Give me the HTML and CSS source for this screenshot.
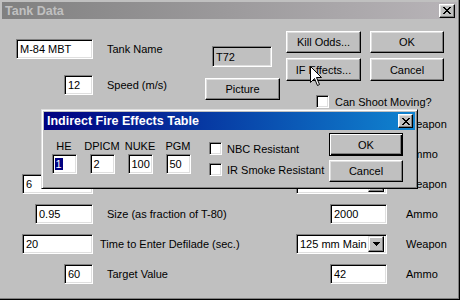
FILE: index.html
```html
<!DOCTYPE html>
<html lang="en">
<head>
  <meta charset="UTF-8" />
  <title>Tank Data</title>
  <link rel="stylesheet" href="styles.css">
</head>
<body>
  <div class="window">
    <div class="titlebar inactive">
      <span class="title">Tank Data</span>
      <span class="tb-btn">
        <svg width="8" height="7" viewBox="0 0 8 7"><path d="M0 0h2v1H0zM6 0h2v1H6zM1 1h2v1H1zM5 1h2v1H5zM2 2h4v1H2zM3 3h2v1H3zM2 4h4v1H2zM1 5h2v1H1zM5 5h2v1H5zM0 6h2v1H0zM6 6h2v1H6z"/></svg>
      </span>
    </div>

    <div class="client">
      <div class="top">
        <div class="top-left">
          <div class="frow">
            <div class="fcell"><div class="field w77">M-84 MBT</div></div>
            <span class="label">Tank Name</span>
          </div>
          <div class="frow">
            <div class="fcell"><div class="field w29">12</div></div>
            <span class="label">Speed (m/s)</span>
          </div>
        </div>
        <div class="top-mid">
          <div class="field disabled w60">T72</div>
          <div class="btn picture">Picture</div>
        </div>
        <div class="top-right">
          <div class="btn-grid">
            <div class="btn">Kill Odds...</div>
            <div class="btn">OK</div>
            <div class="btn">IF Effects...</div>
            <div class="btn">Cancel</div>
          </div>
          <div class="check moving"><span class="box"></span>Can Shoot Moving?</div>
        </div>
      </div>

      <!-- weapon / ammo rows, the upper ones sit under the IF dialog -->
      <div class="rows">
        <div class="fcell"></div>
        <span class="label"></span>
        <div class="rcell"></div>
        <span class="rlabel">Weapon</span>

        <div class="fcell"></div>
        <span class="label"></span>
        <div class="rcell"></div>
        <span class="rlabel">Ammo</span>

        <div class="fcell"><div class="field w71">6</div></div>
        <span class="label"></span>
        <div class="rcell"><div class="combo"><span class="combo-text"></span><span class="drop"><svg width="7" height="4" viewBox="0 0 7 4"><path d="M0 0h7v1H0zM1 1h5v1H1zM2 2h3v1H2zM3 3h1v1H3z"/></svg></span></div></div>
        <span class="rlabel">Weapon</span>

        <div class="fcell"><div class="field w58">0.95</div></div>
        <span class="label">Size (as fraction of T-80)</span>
        <div class="rcell"><div class="field w57">2000</div></div>
        <span class="rlabel">Ammo</span>

        <div class="fcell"><div class="field w71">20</div></div>
        <span class="label near">Time to Enter Defilade (sec.)</span>
        <div class="rcell"><div class="combo"><span class="combo-text">125 mm Main Gun</span><span class="drop"><svg width="7" height="4" viewBox="0 0 7 4"><path d="M0 0h7v1H0zM1 1h5v1H1zM2 2h3v1H2zM3 3h1v1H3z"/></svg></span></div></div>
        <span class="rlabel">Weapon</span>

        <div class="fcell"><div class="field w29">60</div></div>
        <span class="label">Target Value</span>
        <div class="rcell"><div class="field w57">42</div></div>
        <span class="rlabel">Ammo</span>
      </div>
    </div>

    <!-- modal on top of the form -->
    <div class="dialog">
      <div class="titlebar active">
        <span class="title">Indirect Fire Effects Table</span>
        <span class="tb-btn small">
          <svg width="8" height="7" viewBox="0 0 8 7"><path d="M0 0h2v1H0zM6 0h2v1H6zM1 1h2v1H1zM5 1h2v1H5zM2 2h4v1H2zM3 3h2v1H3zM2 4h4v1H2zM1 5h2v1H1zM5 5h2v1H5zM0 6h2v1H0zM6 6h2v1H6z"/></svg>
        </span>
      </div>
      <div class="dlg-body">
        <div class="if-table">
          <span>HE</span>
          <span>DPICM</span>
          <span>NUKE</span>
          <span>PGM</span>
          <div class="field w25"><span class="sel">1</span></div>
          <div class="field w25">2</div>
          <div class="field w25">100</div>
          <div class="field w25">50</div>
        </div>
        <div class="if-checks">
          <div class="check"><span class="box"></span>NBC Resistant</div>
          <div class="check"><span class="box"></span>IR Smoke Resistant</div>
        </div>
        <div class="dlg-buttons">
          <div class="btn default">OK</div>
          <div class="btn">Cancel</div>
        </div>
      </div>
    </div>

    <svg class="cursor" width="13" height="21" viewBox="0 0 13 21">
      <path d="M0.5 0.5V16.5L4.5 12.5L7.5 19.5L9.5 18.5L6.5 11.5H11.5Z" fill="#fff" stroke="#000" stroke-width="1"/>
    </svg>
  </div>
</body>
</html>
```

FILE: styles.css
```css
body {
  margin: 0;
  font-family: "Liberation Sans", Arial, sans-serif;
  font-size: 11px;
  color: #000;
  background: #c0c0c0;
}
.window {
  position: relative;
  width: 460px;
  height: 300px;
  box-sizing: border-box;
  padding: 2px 3px 3px 2px;
  background: #c0c0c0;
  box-shadow: inset -1px -1px #000, inset -2px -2px #808080;
  overflow: hidden;
}
.titlebar {
  display: flex;
  align-items: center;
  justify-content: space-between;
  height: 17px;
  padding: 0 2px 0 3px;
}
.titlebar .title {
  font-weight: bold;
  font-size: 12.5px;
}
.titlebar.inactive {
  background: linear-gradient(to right, #808080, #b8b4b8);
  color: #c0c0c0;
}
.titlebar.active {
  height: 18px;
  background: linear-gradient(to right, #000080, #1084d0);
  color: #fff;
}
.tb-btn {
  width: 16px;
  height: 14px;
  box-sizing: border-box;
  display: flex;
  align-items: center;
  justify-content: center;
  background: #c0c0c0;
  border: 1px solid;
  border-color: #fff #000 #000 #fff;
  box-shadow: inset -1px -1px #808080, inset 1px 1px #dfdfdf;
}
.tb-btn.small {
  width: 15px;
}
.tb-btn svg {
  fill: #000;
  shape-rendering: crispEdges;
}

/* form */
.client {
  padding-top: 14px;
}
.top {
  display: flex;
  height: 73px;
}
.top-left {
  width: 204px;
  padding-top: 6px;
  display: flex;
  flex-direction: column;
  gap: 16px;
}
.frow {
  display: flex;
  align-items: center;
}
.fcell,
.rcell {
  width: 91px;
  display: flex;
  justify-content: flex-end;
}
.label {
  padding-left: 14px;
  white-space: nowrap;
}
.label.near {
  padding-left: 7px;
}
.rlabel {
  padding-left: 19px;
}
.top-mid {
  width: 80px;
  padding-top: 13px;
}
.top-mid .field {
  margin-left: 6px;
  height: 21px;
}
.btn.picture {
  width: 75px;
  height: 22px;
  margin-top: 11px;
  margin-left: -1px;
}
.top-right {
  display: flex;
  flex-direction: column;
  margin-top: -2px;
}
.btn-grid {
  display: grid;
  grid-template-columns: 75px 74px;
  grid-template-rows: 22px 23px;
  column-gap: 9px;
  row-gap: 5px;
}
.check {
  display: flex;
  align-items: center;
  gap: 5px;
  white-space: nowrap;
}
.check.moving {
  margin: 14px 0 0 30px;
  gap: 6px;
}
.box {
  width: 13px;
  height: 13px;
  box-sizing: border-box;
  background: #fff;
  border: 1px solid;
  border-color: #808080 #fff #fff #808080;
  box-shadow: inset 1px 1px #000, inset -1px -1px #dfdfdf;
}

.rows {
  display: grid;
  grid-template-columns: 91px 203px 91px 1fr;
  grid-auto-rows: 20px;
  row-gap: 10px;
  align-items: center;
  margin-top: 8px;
}

/* controls */
.field {
  height: 20px;
  box-sizing: border-box;
  padding: 0 3px;
  display: flex;
  align-items: center;
  background: #fff;
  border: 1px solid;
  border-color: #808080 #fff #fff #808080;
  box-shadow: inset 1px 1px #000, inset -1px -1px #dfdfdf;
  white-space: nowrap;
  overflow: hidden;
}
.field.disabled {
  background: #c0c0c0;
}
.w25 { width: 25px; }
.w29 { width: 29px; }
.w57 { width: 57px; }
.w58 { width: 58px; }
.w60 { width: 60px; }
.w71 { width: 71px; }
.w77 { width: 77px; }
.sel {
  background: #000080;
  color: #fff;
  padding: 0 1px;
  margin-left: -1px;
}
.combo {
  width: 91px;
  height: 20px;
  box-sizing: border-box;
  display: flex;
  align-items: center;
  padding: 2px;
  background: #fff;
  border: 1px solid;
  border-color: #808080 #fff #fff #808080;
  box-shadow: inset 1px 1px #000, inset -1px -1px #dfdfdf;
}
.combo-text {
  flex: 1;
  overflow: hidden;
  white-space: nowrap;
  padding-left: 1px;
}
.drop {
  width: 16px;
  height: 16px;
  box-sizing: border-box;
  display: flex;
  align-items: center;
  justify-content: center;
  background: #c0c0c0;
  border: 1px solid;
  border-color: #dfdfdf #000 #000 #dfdfdf;
  box-shadow: inset -1px -1px #808080, inset 1px 1px #fff;
}
.drop svg {
  fill: #000;
  shape-rendering: crispEdges;
}
.btn {
  box-sizing: border-box;
  display: flex;
  align-items: center;
  justify-content: center;
  background: #c0c0c0;
  border: 1px solid;
  border-color: #fff #000 #000 #fff;
  box-shadow: inset -1px -1px #808080, inset 1px 1px #dfdfdf;
  white-space: nowrap;
}
.btn.default {
  border-color: #000;
  box-shadow: inset 1px 1px #fff, inset -1px -1px #000, inset -2px -2px #808080;
}

/* indirect fire dialog */
.dialog {
  position: absolute;
  left: 41px;
  top: 109px;
  width: 377px;
  height: 80px;
  box-sizing: border-box;
  padding: 2px;
  background: #c0c0c0;
  border: 1px solid;
  border-color: #dfdfdf #000 #000 #dfdfdf;
  box-shadow: inset 1px 1px #fff, inset -1px -1px #808080;
}
.dlg-body {
  display: flex;
  padding-top: 3px;
}
.if-table {
  display: grid;
  grid-template-columns: repeat(4, 36px);
  grid-template-rows: 14px 20px;
  column-gap: 2px;
  row-gap: 2px;
  justify-items: center;
  align-items: end;
  margin: 5px 0 0 2px;
}
.if-checks {
  display: flex;
  flex-direction: column;
  gap: 8px;
  margin: 9px 0 0 13px;
}
.dlg-buttons {
  display: flex;
  flex-direction: column;
  gap: 4px;
  margin-left: auto;
  margin-right: 12px;
}
.dlg-buttons .btn {
  width: 74px;
  height: 22px;
}
.dlg-buttons .btn.default {
  height: 23px;
}

.cursor {
  position: absolute;
  left: 310px;
  top: 66px;
}
```
